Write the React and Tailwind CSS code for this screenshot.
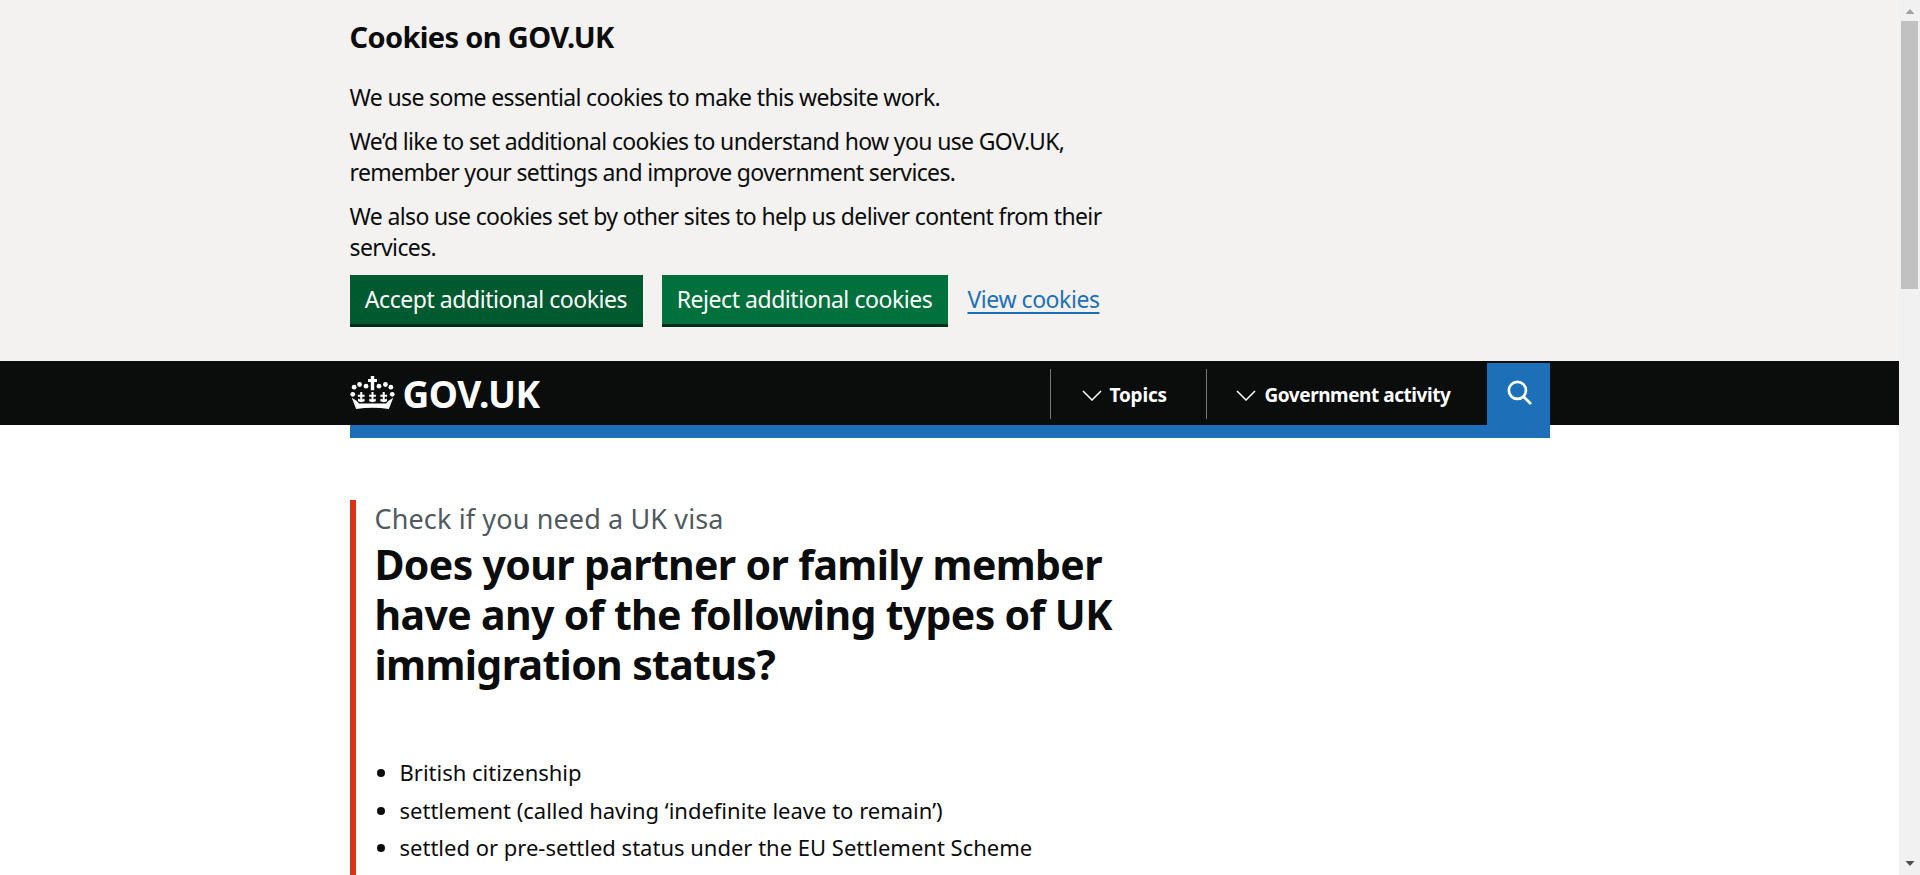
const FONT = "font-['Noto_Sans',sans-serif]";

function Crown() {
  const dots = [[22, 87], [26, 66], [42, 58], [61, 63], [99, 63], [118, 58], [134, 66], [138, 87]];
  return (
    <svg width="45" height="33" viewBox="15 33 130 97" fill="#fff" className="mt-[-2px]" aria-hidden="true">
      <path d="M75 33h10v9h8v9h-8v24H75V51h-8v-9h8z" />
      {dots.map(([x, y]) => (
        <circle key={`${x}-${y}`} cx={x} cy={y} r="7" />
      ))}
      {[47, 80, 113].map((x) => (
        <g key={x} transform={`translate(${x} 82)`}>
          <path d="M-3-2h6v8h7v6H3v8l6-3 1 8-10 3-10-3 1-8 6 3v-8h-7V6h7z" />
        </g>
      ))}
      <path d="M19 97l14 9 7 8h80l7-8 14-9-13 33c-32-5-64-5-96 0z" />
    </svg>
  );
}

function Chevron() {
  return (
    <svg width="20" height="11" viewBox="0 0 20 11" fill="none" stroke="#fff" strokeWidth="1.500" aria-hidden="true">
      <path d="M1 1l9 9 9-9" />
    </svg>
  );
}

function SearchIcon() {
  return (
    <svg width="25" height="25" viewBox="0 0 24 24" fill="none" stroke="#fff" strokeWidth="2.600" className="ml-[2px] mt-[-3px]" aria-hidden="true">
      <circle cx="10" cy="10" r="8.200" />
      <path d="M15.800 15.800l7.200 7.200" />
    </svg>
  );
}

function CookieBanner() {
  return (
    <section className="bg-[#f3f2f1] h-[361px] pt-[19px]">
      <div className="w-[1200px] mx-auto text-[#0b0c0c]">
        <div className="w-[780px]">
          <h2 className="text-[29px] leading-[36px] font-bold tracking-[-0.65px]">Cookies on GOV.UK</h2>
          <div className="mt-[27px] text-[23px] leading-[31px] tracking-[-0.64px] flex flex-col gap-[13px]">
            <p>We use some essential cookies to make this website work.</p>
            <p>We’d like to set additional cookies to understand how you use GOV.UK, remember your settings and improve government services.</p>
            <p>We also use cookies set by other sites to help us deliver content from their services.</p>
          </div>
          <div className="mt-[12px] flex items-center gap-[19px] text-[23px] tracking-[-0.45px]">
            <button className="h-[49px] w-[293px] pb-[1px] bg-[#005a30] text-white shadow-[0_3px_0_#002d18]">Accept additional cookies</button>
            <button className="h-[49px] w-[286px] pb-[1px] bg-[#00703c] text-white shadow-[0_3px_0_#002d18]">Reject additional cookies</button>
            <a href="#" className="ml-[1px] text-[#1d70b8] underline underline-offset-4">View cookies</a>
          </div>
        </div>
      </div>
    </section>
  );
}

function Header() {
  return (
    <header className="bg-[#0b0c0c] h-[64px]">
      <div className="w-[1200px] mx-auto h-full flex items-stretch text-white">
        <a href="#" className="flex items-center gap-[8px]">
          <Crown />
          <span className="text-[37px] font-bold leading-none tracking-[-0.5px]">GOV.UK</span>
        </a>
        <nav className="ml-auto flex items-stretch pt-[2px]">
          <div className="flex items-center my-[6px] pt-[2px] border-l border-[#6f777b] pl-[31px] w-[156px] gap-[8px] text-[19px] font-bold tracking-[-0.2px]">
            <Chevron />
            Topics
          </div>
          <div className="flex items-center my-[6px] pt-[2px] border-l border-[#6f777b] pl-[29px] w-[281px] gap-[9px] text-[19px] font-bold tracking-[-0.45px]">
            <Chevron />
            Government activity
          </div>
          <button className="w-[63px] bg-[#1d70b8] flex items-center justify-center">
            <SearchIcon />
          </button>
        </nav>
      </div>
    </header>
  );
}

export default function App() {
  return (
    <div className={`h-[875px] flex overflow-hidden bg-white ${FONT}`}>
      <div className="flex-1 min-w-0">
        <CookieBanner />
        <Header />
        <div className="w-[1200px] mx-auto">
          <div className="h-[13px] bg-[#1d70b8]" />
          <main className="mt-[62px] border-l-[6px] border-[#d4351c] pl-[19px] pt-[1px] text-[#0b0c0c]">
            <div className="w-[780px]">
              <p className="text-[27px] leading-[36px] tracking-[0.13px] text-[#505a5f]">Check if you need a UK visa</p>
              <h1 className="mt-[2px] text-[41px] leading-[50px] font-bold tracking-[-0.65px]">
                Does your partner or family member have any of the following types of UK immigration status?
              </h1>
              <ul className="mt-[68px] pl-[25px] list-disc text-[22px] leading-[30px] flex flex-col gap-[7.5px] pb-[200px]">
                <li>British citizenship</li>
                <li>settlement (called having ‘indefinite leave to remain’)</li>
                <li>settled or pre-settled status under the EU Settlement Scheme</li>
              </ul>
            </div>
          </main>
        </div>
      </div>
      <div className="w-[21px] shrink-0 bg-[#f1f1f1] flex flex-col items-center">
        <svg width="10" height="21" viewBox="0 0 10 21" fill="#a3a3a3" className="shrink-0" aria-hidden="true">
          <path d="M5 9l4.500 5H.500z" />
        </svg>
        <div className="w-[17px] h-[268px] bg-[#c1c1c1]" />
        <div className="flex-1" />
        <svg width="10" height="21" viewBox="0 0 10 21" fill="#505050" className="shrink-0" aria-hidden="true">
          <path d="M.500 7h9L5 12z" />
        </svg>
      </div>
    </div>
  );
}
